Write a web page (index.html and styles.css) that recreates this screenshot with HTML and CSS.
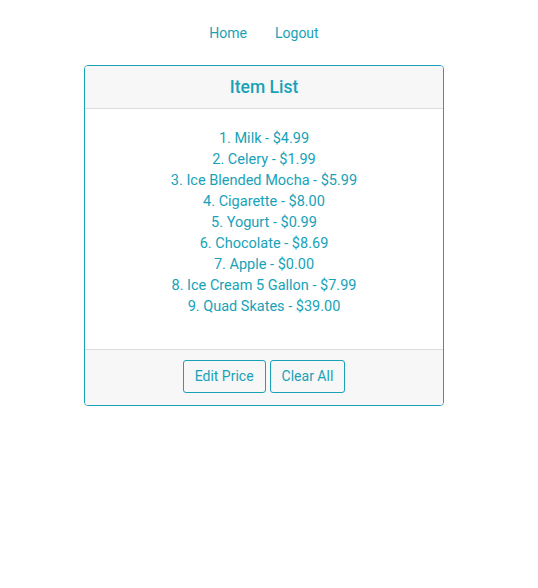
FILE: index.html
```html
<!DOCTYPE html>
<html>
<head>
<meta charset="utf-8">
<link rel="stylesheet" href="styles.css">
</head>
<body>
<div class="page">
  <nav class="nav">
    <a class="nav-link" href="#">Home</a>
    <a class="nav-link" href="#">Logout</a>
  </nav>
  <div class="card">
    <div class="card-header">Item List</div>
    <div class="card-body">
      <div class="item">1. Milk - $4.99</div>
      <div class="item">2. Celery - $1.99</div>
      <div class="item">3. Ice Blended Mocha - $5.99</div>
      <div class="item">4. Cigarette - $8.00</div>
      <div class="item">5. Yogurt - $0.99</div>
      <div class="item">6. Chocolate - $8.69</div>
      <div class="item">7. Apple - $0.00</div>
      <div class="item">8. Ice Cream 5 Gallon - $7.99</div>
      <div class="item">9. Quad Skates - $39.00</div>
    </div>
    <div class="card-footer">
      <button class="btn">Edit Price</button>
      <button class="btn">Clear All</button>
    </div>
  </div>
</div>
</body>
</html>
```

FILE: styles.css
```css
body {
  margin: 0;
  font-family: Roboto, "Noto Sans", sans-serif;
  font-size: 14px;
  line-height: 21px;
  color: #17a2b8;
  background: #fff;
}
.page {
  width: 528px;
  display: flex;
  flex-direction: column;
  align-items: center;
}
.nav {
  display: flex;
  padding-top: 15px;
  margin-bottom: 13px;
}
.nav-link {
  color: #17a2b8;
  text-decoration: none;
  padding: 8px 14px;
}
.card {
  width: 360px;
  box-sizing: border-box;
  border: 1px solid #17a2b8;
  border-radius: 4px;
  overflow: hidden;
}
.card-header {
  background: #f7f7f7;
  border-bottom: 1px solid #dcdcdc;
  text-align: center;
  font-size: 17.5px;
  font-weight: 500;
  line-height: 21px;
  padding: 11px 20px 10px;
}
.card-body {
  padding: 19px 20px 32px;
  text-align: center;
}
.item {
  font-size: 14.5px;
}
.card-footer {
  background: #f7f7f7;
  border-top: 1px solid #dcdcdc;
  padding: 10px 20px 12px;
  display: flex;
  justify-content: center;
  gap: 4px;
}
.btn {
  font-family: inherit;
  font-size: 14px;
  line-height: 21px;
  color: #17a2b8;
  background: transparent;
  border: 1px solid #17a2b8;
  border-radius: 3px;
  padding: 5px 11px;
}
```
